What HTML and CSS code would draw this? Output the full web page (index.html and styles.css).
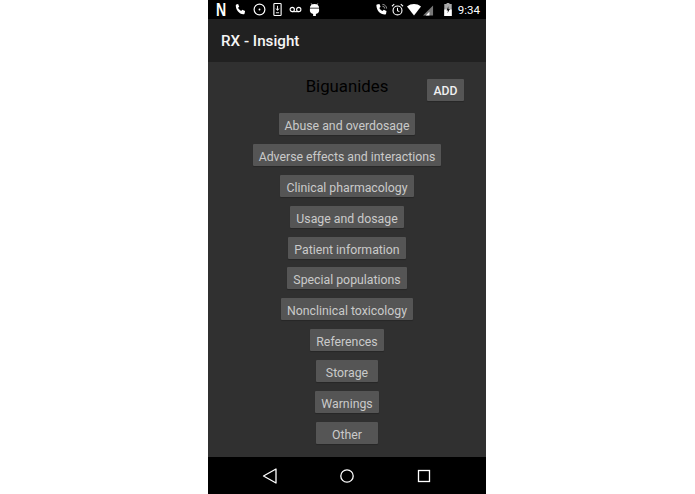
FILE: index.html
```html
<!DOCTYPE html>
<html lang="en">
<head>
<meta charset="utf-8">
<title>RX - Insight</title>
<link rel="stylesheet" href="styles.css">
</head>
<body>
<div class="phone">
  <div class="status">
    <div class="icons">
      <span class="netflix">N</span>
      <svg class="ic" viewBox="0 0 14 14"><path d="M3.500 1.500 5.500 1l1.200 3-1.300 1.200c.7 1.500 1.900 2.700 3.400 3.400L10 7.300l3 1.200-.5 2.700c-.2.700-.8 1-1.500 1C6.500 11.700 3.300 8 3 3c0-.6 0-1.200.5-1.500z" fill="#fff"/></svg>
      <svg class="ic" viewBox="0 0 14 14"><circle cx="7" cy="7" r="5.800" fill="none" stroke="#fff" stroke-width="1.300"/><circle cx="7" cy="7" r="1" fill="#fff"/></svg>
      <svg class="ic dl" viewBox="0 0 9 14"><rect x=".6" y=".6" width="7.800" height="12.800" rx=".8" fill="none" stroke="#fff" stroke-width="1.200"/><path d="M4.500 3v4.500M3 6l1.500 2L6 6M2.800 10.500h3.400" fill="none" stroke="#fff"/></svg>
      <svg class="ic" viewBox="0 0 14 14"><circle cx="3.500" cy="7" r="2.300" fill="none" stroke="#fff" stroke-width="1.200"/><circle cx="10.500" cy="7" r="2.300" fill="none" stroke="#fff" stroke-width="1.200"/><path d="M3.500 9.300h7" stroke="#fff" stroke-width="1.200"/></svg>
      <svg class="ic droid" viewBox="0 0 12 14"><path d="M1 5a5 4 0 0 1 10 0zM1 6h10v3a5 3.500 0 0 1-3.500 2.900V14h-3v-2.100A5 3.500 0 0 1 1 9z" fill="#fff"/><path d="M3.500 2 2.500.5M8.500 2l1-1.500" stroke="#fff"/></svg>
    </div>
    <div class="icons right">
      <svg class="ic" viewBox="0 0 14 14"><path d="M2 1.500 4.800 1l1.200 3-1.300 1.300c.7 1.500 1.900 2.700 3.400 3.400L9.400 7.400l3 1.200-.5 2.900c-.2.600-.8 1-1.400 1C5.500 12.200 2 8.500 1.500 3c0-.6 0-1.200.5-1.500z" fill="#fff"/><path d="M8 1.500A4.500 4.500 0 0 1 12.500 6M8 3.500A2.500 2.500 0 0 1 10.500 6" fill="none" stroke="#999"/></svg>
      <svg class="ic" viewBox="0 0 14 14"><circle cx="7" cy="8" r="4.800" fill="none" stroke="#fff" stroke-width="1.200"/><path d="M7 5v3.300l2 1M1 3.500 3.500 1.300M13 3.500 10.500 1.300" fill="none" stroke="#fff" stroke-width="1.100"/></svg>
      <svg class="ic wifi" viewBox="0 0 14 12"><path d="M0 2.500C4-.8 10-.8 14 2.500L7 11.500z" fill="#fff"/></svg>
      <svg class="ic signal" viewBox="0 0 12 12"><path d="M0 12 11 1v11z" fill="#777"/><path d="M3 12 7 8v4z" fill="#fff"/></svg>
      <svg class="ic battery" viewBox="0 0 8 14"><path d="M2.500 0h3v1.200H8V14H0V1.200h2.500z" fill="#aaa"/><path d="M0 7h8v7H0z" fill="#fff"/><path d="M4.300 3.500 2.500 8h1.500l-.5 3L6 6.500H4.500z" fill="#111"/></svg>
      <span class="clock">9:34</span>
    </div>
  </div>
  <header class="appbar">RX - Insight</header>
  <main class="content">
    <div class="heading">
      <h1 class="title">Biguanides</h1>
      <button class="btn add">ADD</button>
    </div>
    <div class="list">
      <button class="btn item">Abuse and overdosage</button>
      <button class="btn item">Adverse effects and interactions</button>
      <button class="btn item">Clinical pharmacology</button>
      <button class="btn item">Usage and dosage</button>
      <button class="btn item">Patient information</button>
      <button class="btn item">Special populations</button>
      <button class="btn item">Nonclinical toxicology</button>
      <button class="btn item">References</button>
      <button class="btn item wide">Storage</button>
      <button class="btn item wide">Warnings</button>
      <button class="btn item wide">Other</button>
    </div>
  </main>
  <nav class="navbar">
    <svg class="nav" viewBox="0 0 16 16"><path d="M14 1v14L1.500 8z" fill="none" stroke="#fff" stroke-width="1.300" stroke-linejoin="round"/></svg>
    <svg class="nav" viewBox="0 0 16 16"><circle cx="8" cy="8" r="6.200" fill="none" stroke="#fff" stroke-width="1.300"/></svg>
    <svg class="nav" viewBox="0 0 16 16"><rect x="2.500" y="2.500" width="11" height="11" fill="none" stroke="#fff" stroke-width="1.300"/></svg>
  </nav>
</div>
</body>
</html>
```
FILE: styles.css
```css
* { box-sizing: border-box; }
html, body { margin: 0; height: 100%; background: #fff; }
body { display: flex; justify-content: flex-start; font-family: Roboto, "Liberation Sans", sans-serif; }
.phone {
  width: 278px;
  height: 494px;
  margin-left: 208px;
  display: flex;
  flex-direction: column;
  background: #303030;
}
.status {
  height: 19px;
  background: #000;
  display: flex;
  justify-content: space-between;
  align-items: center;
  padding: 0 6px 0 8px;
  flex: none;
}
.icons { display: flex; align-items: center; gap: 7px; }
.icons.right { gap: 3px; }
.ic { width: 13px; height: 13px; display: block; }
.dl { width: 9px; }
.droid { width: 11px; height: 13px; }
.wifi { width: 14px; height: 12px; }
.signal { width: 11px; height: 12px; margin-left: -1px; }
.battery { width: 8px; height: 13px; margin: 0 3px 0 7px; }
.netflix {
  color: #fff;
  font: bold 18px/14px "Liberation Sans", sans-serif;
  width: 10px;
  transform: scaleX(.78);
  transform-origin: left center;
}
.clock { color: #fff; font-size: 11.500px; }
.appbar {
  height: 43px;
  flex: none;
  background: #212121;
  color: #f5f5f5;
  font-size: 15.200px;
  font-weight: 500;
  display: flex;
  align-items: center;
  padding-left: 13px;
}
.content {
  flex: 1;
  display: flex;
  flex-direction: column;
  min-height: 0;
}
.heading {
  height: 51px;
  flex: none;
  display: flex;
  align-items: flex-start;
  justify-content: center;
  position: relative;
}
.title {
  margin: 14px 0 0;
  font-size: 16.800px;
  line-height: 21px;
  font-weight: 400;
  color: #000;
}
.btn {
  border: 0;
  border-radius: 1px;
  background: #555;
  font-family: inherit;
  padding: 4px 6px 0;
  height: 22px;
  box-shadow: 0 1px 1px rgba(0,0,0,.2);
}
.add {
  position: absolute;
  top: 17px;
  right: 22px;
  width: 37px;
  padding: 1px 0 0;
  color: #f0f0f0;
  font-size: 12.200px;
  font-weight: 500;
}
.list {
  display: flex;
  flex-direction: column;
  align-items: center;
  gap: 8.900px;
}
.item {
  color: #cacaca;
  font-size: 12.300px;
  white-space: nowrap;
}
.wide { min-width: 62px; }
.navbar {
  height: 37px;
  flex: none;
  background: #000;
  display: flex;
  justify-content: space-between;
  align-items: center;
  padding: 0 54px;
}
.nav { width: 16px; height: 16px; display: block; }
```
